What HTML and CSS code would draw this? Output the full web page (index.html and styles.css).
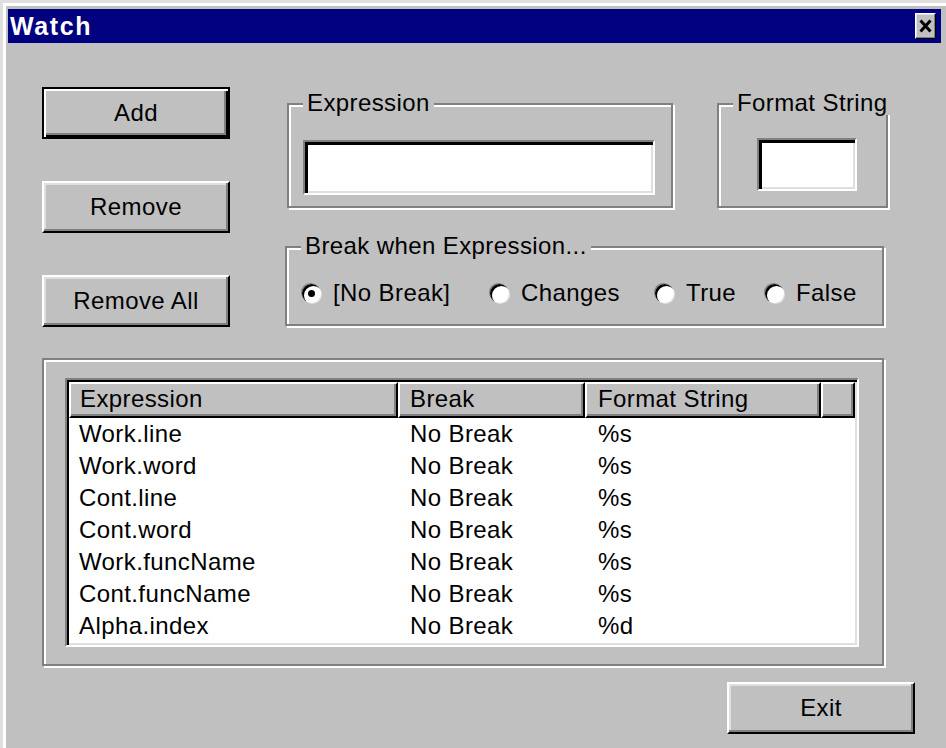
FILE: index.html
```html
<!DOCTYPE html>
<html lang="en">
<head>
<meta charset="utf-8">
<title>Watch</title>
<link rel="stylesheet" href="styles.css">
</head>
<body>
<div class="window">
  <div class="titlebar">
    <span class="title">Watch</span>
    <button class="close" aria-label="Close">
      <svg width="13" height="14" viewBox="0 0 13 14">
        <path d="M1.5 1.5 L11.5 12.5 M11.5 1.5 L1.5 12.5" stroke="#000" stroke-width="3" fill="none"/>
      </svg>
    </button>
  </div>

  <div class="client">
    <div class="top">
      <div class="actions">
        <button class="btn default">Add</button>
        <button class="btn">Remove</button>
        <button class="btn">Remove All</button>
      </div>

      <div class="settings">
        <div class="row">
          <div class="group expr">
            <span class="legend">Expression</span>
            <div class="field wide"></div>
          </div>
          <div class="group fmt">
            <span class="legend">Format String</span>
            <div class="field narrow"></div>
          </div>
        </div>

        <div class="group brk">
          <span class="legend">Break when Expression...</span>
          <div class="radios">
            <label class="opt"><span class="radio checked"></span>[No Break]</label>
            <label class="opt"><span class="radio"></span>Changes</label>
            <label class="opt"><span class="radio"></span>True</label>
            <label class="opt"><span class="radio"></span>False</label>
          </div>
        </div>
      </div>
    </div>

    <div class="group list-group">
      <div class="listview">
        <div class="lv-header">
          <div class="hcell">Expression</div>
          <div class="hcell">Break</div>
          <div class="hcell">Format String</div>
          <div class="hcell"></div>
        </div>
        <div class="lv-row"><span>Work.line</span><span>No Break</span><span>%s</span></div>
        <div class="lv-row"><span>Work.word</span><span>No Break</span><span>%s</span></div>
        <div class="lv-row"><span>Cont.line</span><span>No Break</span><span>%s</span></div>
        <div class="lv-row"><span>Cont.word</span><span>No Break</span><span>%s</span></div>
        <div class="lv-row"><span>Work.funcName</span><span>No Break</span><span>%s</span></div>
        <div class="lv-row"><span>Cont.funcName</span><span>No Break</span><span>%s</span></div>
        <div class="lv-row"><span>Alpha.index</span><span>No Break</span><span>%d</span></div>
      </div>
    </div>

    <div class="footer">
      <button class="btn">Exit</button>
    </div>
  </div>
</div>
</body>
</html>
```

FILE: styles.css
```css
* {
  box-sizing: border-box;
}

html,
body {
  margin: 0;
}

body {
  background: #c0c0c0;
  font-family: "Liberation Sans", Arial, sans-serif;
  font-size: 24px;
  letter-spacing: 0.4px;
  color: #000;
}

/* dialog frame */
.window {
  width: 946px;
  height: 748px;
  padding: 9px 5px 0 8px;
  overflow: hidden;
  box-shadow: inset 3px 3px 0 #dfdfdf, inset 6px 6px 0 #fff;
}

.titlebar {
  height: 34px;
  background: #000080;
  display: flex;
  align-items: center;
  justify-content: space-between;
  padding: 0 5px 0 2px;
}

.title {
  color: #fff;
  font-weight: bold;
  font-size: 25px;
  letter-spacing: 1.6px;
  line-height: 34px;
}

.close {
  width: 21px;
  height: 26px;
  padding: 0;
  background: #c0c0c0;
  border: 1px solid;
  border-color: #fff #000 #000 #fff;
  box-shadow: inset -1px -1px 0 #808080, inset 1px 1px 0 #dfdfdf;
  display: flex;
  align-items: center;
  justify-content: center;
}

.close svg {
  display: block;
}

/* client area */
.client {
  padding-left: 34px;
}

.top {
  display: flex;
  align-items: flex-start;
}

.actions {
  display: flex;
  flex-direction: column;
  gap: 42px;
  margin-top: 44px;
  width: 188px;
}

.btn {
  width: 188px;
  height: 52px;
  padding: 0;
  font: inherit;
  letter-spacing: inherit;
  color: #000;
  background: #c0c0c0;
  border: 2px solid;
  border-color: #fff #000 #000 #fff;
  box-shadow: inset -2px -2px 0 #808080, inset 2px 2px 0 #dfdfdf;
}

.btn.default {
  border-color: #000;
  box-shadow: inset 2px 2px 0 #fff, inset -2px -2px 0 #000, inset -4px -4px 0 #808080;
}

.settings {
  margin-left: 55px;
  margin-top: 60px;
  display: flex;
  flex-direction: column;
  gap: 38px;
}

.row {
  display: flex;
  gap: 44px;
  padding-left: 2px;
}

/* etched group boxes */
.group {
  position: relative;
  border: 2px solid #808080;
  box-shadow: 2px 2px 0 #fff, inset 2px 2px 0 #fff;
}

.legend {
  position: absolute;
  left: 14px;
  top: -14px;
  padding: 0 4px;
  background: #c0c0c0;
  line-height: 24px;
  white-space: nowrap;
}

.expr {
  width: 386px;
  height: 105px;
  padding: 35px 0 0 14px;
}

.fmt {
  width: 171px;
  height: 105px;
  padding: 33px 0 0 38px;
}

.field {
  background: #fff;
  border: 2px solid;
  border-color: #808080 #fff #fff #808080;
  box-shadow: inset 3px 3px 0 #000, inset -2px -2px 0 #dfdfdf;
}

.field.wide {
  width: 352px;
  height: 55px;
}

.field.narrow {
  width: 100px;
  height: 53px;
}

.brk {
  width: 599px;
  height: 80px;
  padding: 30px 0 0 15px;
}

.radios {
  display: grid;
  grid-template-columns: 188px 165px 110px auto;
  height: 30px;
  align-items: center;
}

.opt {
  display: flex;
  align-items: center;
  gap: 12px;
  line-height: 30px;
}

.radio {
  width: 19px;
  height: 19px;
  flex: none;
  border-radius: 50%;
  background: #fff;
  box-shadow: inset 2px 2px 0 #000, -1px -1px 0 #808080, 1px 1px 0 #dfdfdf;
  display: flex;
  align-items: center;
  justify-content: center;
}

.radio.checked::after {
  content: "";
  width: 7px;
  height: 7px;
  border-radius: 50%;
  background: #000;
}

/* list view */
.list-group {
  width: 842px;
  height: 308px;
  margin-top: 31px;
  padding: 18px 0 0 21px;
}

.listview {
  width: 794px;
  height: 269px;
  background: #fff;
  border: 2px solid;
  border-color: #808080 #fff #fff #808080;
  box-shadow: inset 2px 2px 0 #000, inset -2px -2px 0 #dfdfdf;
  padding: 2px;
}

.lv-header,
.lv-row {
  display: grid;
  grid-template-columns: 329px 187px 236px 1fr;
}

.hcell {
  height: 36px;
  background: #c0c0c0;
  border: 2px solid;
  border-color: #fff #000 #000 #fff;
  box-shadow: inset -2px -2px 0 #808080;
  padding-left: 9px;
  line-height: 30px;
  white-space: nowrap;
}

.hcell:nth-child(2) {
  padding-left: 10px;
}

.hcell:nth-child(3) {
  padding-left: 11px;
}

.lv-row {
  height: 32px;
  line-height: 32px;
}

.lv-row span:nth-child(1) {
  padding-left: 10px;
}

.lv-row span:nth-child(2) {
  padding-left: 12px;
}

.lv-row span:nth-child(3) {
  padding-left: 13px;
}

.footer {
  margin-top: 16px;
  padding-left: 685px;
}
```
